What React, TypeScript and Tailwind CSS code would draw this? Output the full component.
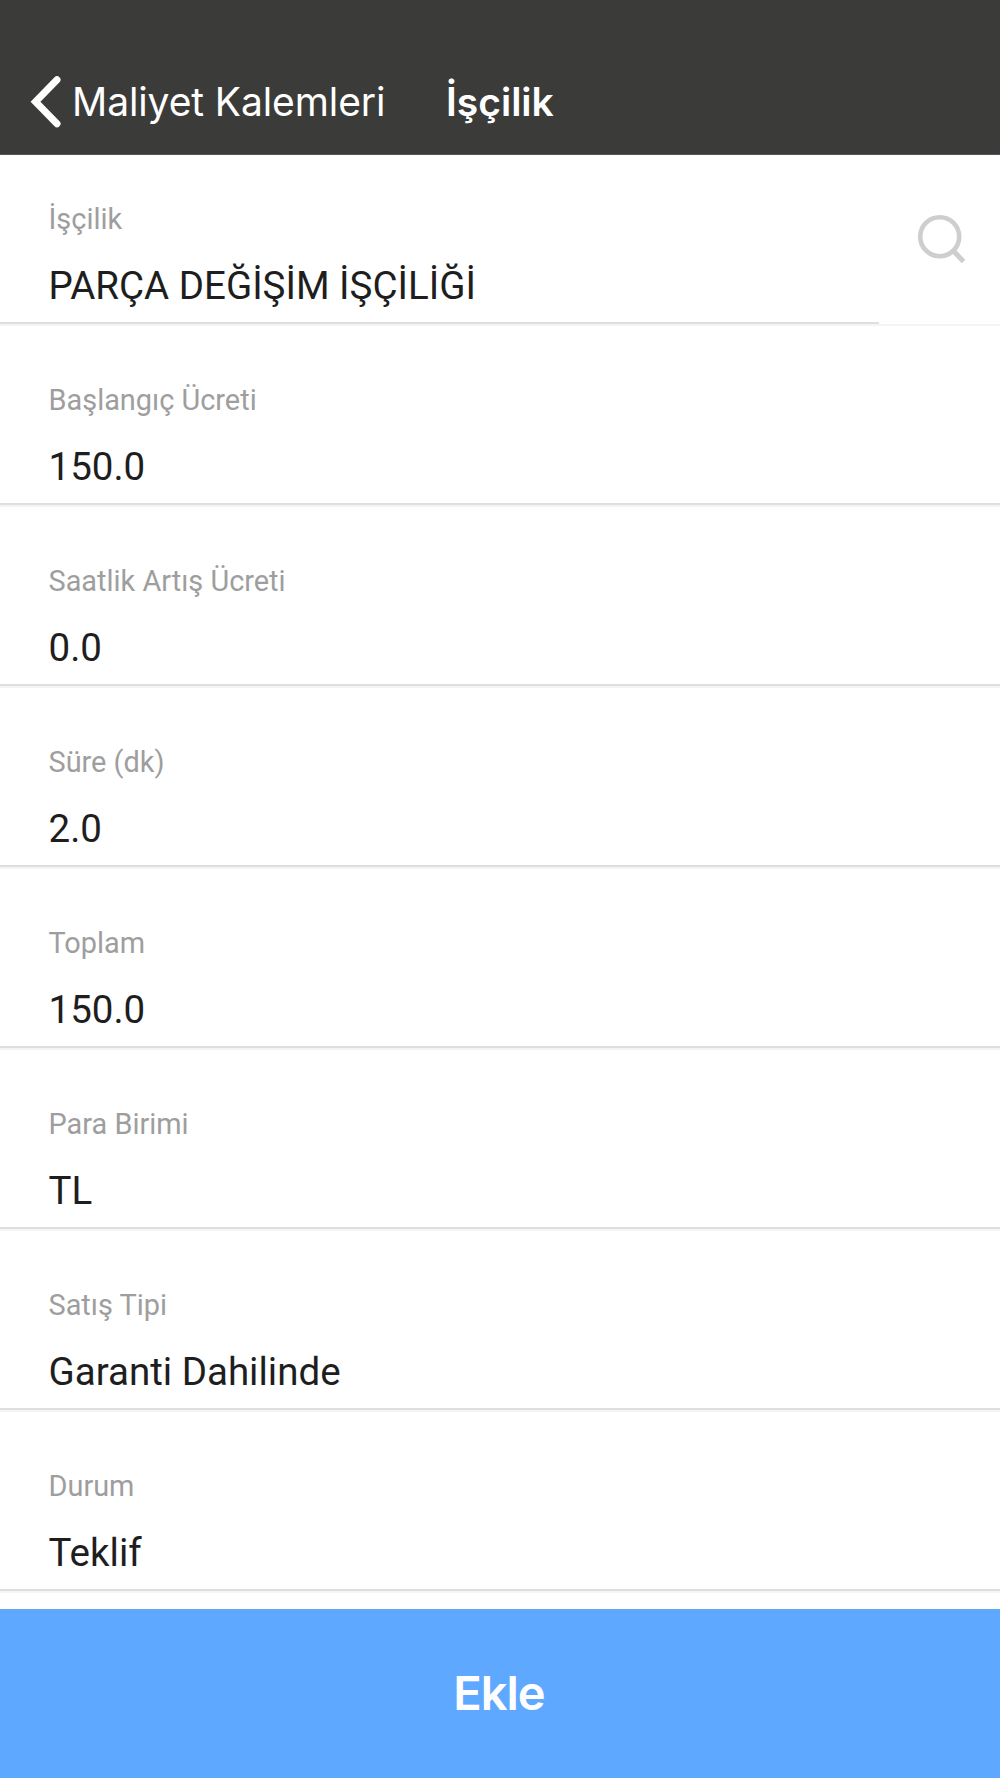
const fields = [
  ['Başlangıç Ücreti', '150.0'],
  ['Saatlik Artış Ücreti', '0.0'],
  ['Süre (dk)', '2.0'],
  ['Toplam', '150.0'],
  ['Para Birimi', 'TL'],
  ['Satış Tipi', 'Garanti Dahilinde'],
  ['Durum', 'Teklif'],
];

function Field({ label, value }: { label: string; value: string }) {
  return (
    <div className="flex h-[181.05px] flex-col border-b-2 border-[#dedede] pl-[48.5px] pt-[60px] font-[Roboto,sans-serif] shadow-[0_2px_0_#f4f4f4]">
      <div className="h-8 text-[28.9px] leading-8 text-[#9e9e9e]">{label}</div>
      <div className="mt-[31px] text-[38.5px] leading-10 text-[#1e1e1e]">{value}</div>
    </div>
  );
}

export default function App() {
  return (
    <div className="flex h-[1778px] w-[1000px] flex-col overflow-hidden bg-white">
      <header className="flex h-[155px] shrink-0 items-end border-b border-[#555653] bg-[#3b3c39] pb-[26px] pl-[29px] font-[Inter,sans-serif] text-white">
        <svg className="h-[52px] w-[32px]" viewBox="0 0 32 52" fill="none" stroke="currentColor" strokeWidth="7" strokeLinecap="round">
          <path d="M28 3.8L6.5 25.8L28 47.8" />
        </svg>
        <div className="ml-[11px] w-[374px] text-[39px] leading-[52px] tracking-[-0.1px]">Maliyet Kalemleri</div>
        <div className="text-[39px] font-semibold leading-[52px]">İşçilik</div>
      </header>
      <main className="flex-1">
        <div className="flex h-[169px]">
          <div className="-mt-3 w-[879px]">
            <Field label="İşçilik" value="PARÇA DEĞİŞİM İŞÇİLİĞİ" />
          </div>
          <div className="h-[171px] flex-1 border-b-2 border-[#f4f4f4] pl-[37px] pt-[58px]">
            <svg className="h-[52px] w-[52px]" viewBox="0 0 52 52" fill="none" stroke="#cecece" strokeWidth="4.6">
              <circle cx="23.7" cy="23.7" r="19.5" />
              <path d="M37.5 38L47.5 48.5" strokeWidth="5" />
            </svg>
          </div>
        </div>
        {fields.map(([label, value]) => (
          <Field key={label} label={label} value={value} />
        ))}
      </main>
      <button className="h-[169px] shrink-0 bg-[#5fa8ff] pr-[2px] font-[Inter,sans-serif] text-[47px] font-semibold tracking-[-1px] text-white">Ekle</button>
    </div>
  );
}
